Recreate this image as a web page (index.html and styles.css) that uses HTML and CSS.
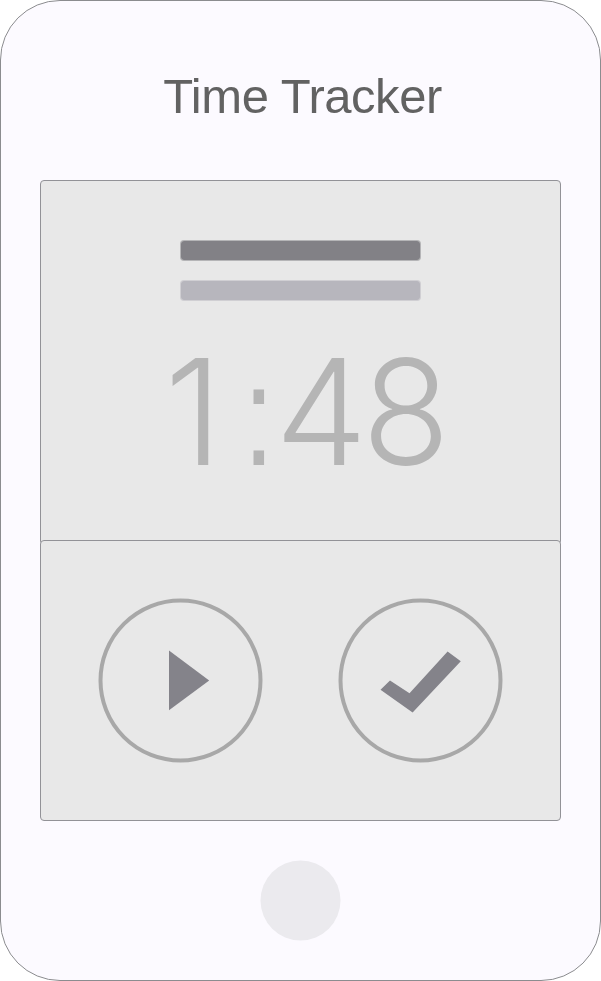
FILE: index.html
```html
<!DOCTYPE html>
<html lang="en">
<head>
<meta charset="utf-8">
<title>Time Tracker</title>
<link rel="stylesheet" href="styles.css">
</head>
<body>
<main class="phone">
  <h1 class="title">Time Tracker</h1>
  <section class="panel display">
    <div class="bar bar-dark"></div>
    <div class="bar bar-light"></div>
    <svg class="time" width="340" height="200" viewBox="130 320 340 200">
      <text class="digit" x="163.500" y="465">1</text>
      <text class="colon" transform="translate(242.5 465) scale(.77 1)">:</text>
      <text class="digit" x="274" y="465">4</text>
      <text class="digit" transform="translate(361 465) scale(.98 1)">8</text>
    </svg>
  </section>
  <section class="panel controls">
    <svg class="control" width="165" height="165" viewBox="0 0 165 165">
      <circle cx="82.5" cy="82.5" r="80"/>
      <path d="M71 52.6V112.3L111.2 82.5Z"/>
    </svg>
    <svg class="control" width="165" height="165" viewBox="0 0 165 165">
      <circle cx="82.5" cy="82.5" r="80"/>
      <path d="M42.5 91.8L52 82.4L71.5 95.2L109.6 53.4L122.8 63.3L74.6 114.4Z"/>
    </svg>
  </section>
  <svg class="home" width="81" height="81" viewBox="0 0 81 81"><circle cx="40.5" cy="40.5" r="40"/></svg>
</main>
</body>
</html>
```
FILE: styles.css
```css
* { box-sizing: border-box; }
body { margin: 0; background: #fff; font-family: "Liberation Sans", Arial, sans-serif; }
.phone {
  width: 601px;
  height: 981px;
  border: 1px solid #8b8c8f;
  border-radius: 60px;
  background: #fcfaff;
  display: flex;
  flex-direction: column;
  align-items: center;
}
.title {
  margin: 67px 0 0;
  padding-left: 4px;
  height: 112px;
  font-size: 49px;
  line-height: 56px;
  font-weight: 400;
  letter-spacing: -0.45px;
  color: #626262;
}
.panel {
  width: 521px;
  border: 1px solid #929297;
  border-radius: 4px;
  background: #e8e8e8;
}
.display {
  height: 365px;
  padding-top: 59px;
  display: flex;
  flex-direction: column;
  align-items: center;
}
.bar {
  width: 241px;
  height: 21px;
  margin-bottom: 19px;
  border: 1px solid;
  border-radius: 4px;
  background-clip: padding-box;
}
.bar-dark { background-color: #828186; border-color: #82818680; }
.bar-light { background-color: #b7b6bd; border-color: #b7b6bd80; }
.time { flex: none; fill: #b5b5b5; }
.digit { font-family: Inter, sans-serif; font-size: 147px; font-weight: 300; }
.colon { font-size: 143px; }
.controls {
  height: 281px;
  margin-top: -5px;
  padding: 0 57px;
  display: flex;
  align-items: center;
  justify-content: space-between;
}
.control circle { fill: none; stroke: #a8a8a8; stroke-width: 4; }
.control path { fill: #84838a; }
.home { margin-top: 39px; fill: #ebeaee; }
```
